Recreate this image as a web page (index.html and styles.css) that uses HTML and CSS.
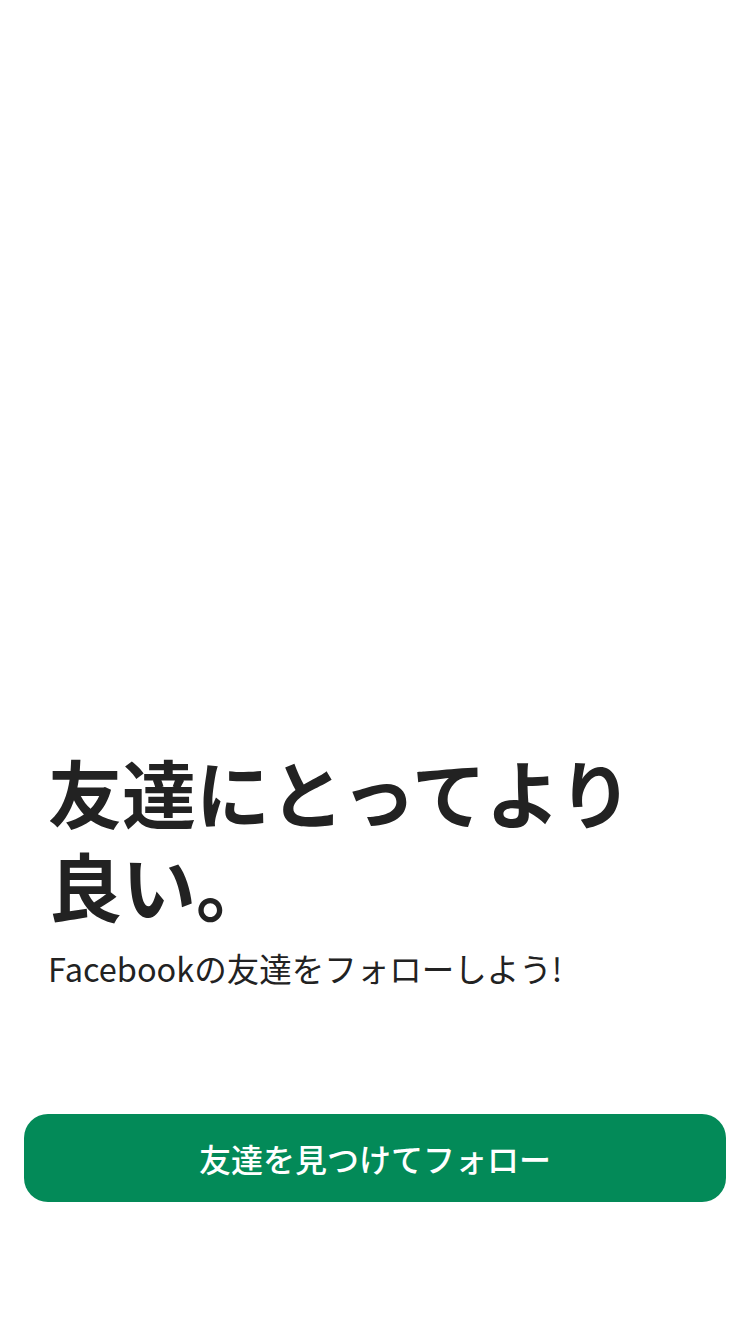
FILE: index.html
```html
<!DOCTYPE html>
<html lang="ja">
<head>
<meta charset="utf-8">
<link rel="stylesheet" href="styles.css">
</head>
<body>
<main class="page">
  <section class="intro">
    <h1 class="title">友達にとってより<br>良い。</h1>
    <p class="subtitle">Facebookの友達をフォローしよう!</p>
  </section>
  <div class="actions">
    <button class="cta">友達を見つけてフォロー</button>
  </div>
</main>
</body>
</html>
```

FILE: styles.css
```css
html, body {
  margin: 0;
  padding: 0;
  background: #ffffff;
}
.page {
  width: 750px;
  height: 1334px;
  display: flex;
  flex-direction: column;
  font-family: "Noto Sans CJK JP", "Noto Sans", sans-serif;
  color: #222222;
}
.intro {
  padding: 744px 48px 0 48px;
}
.title {
  margin: 0;
  font-size: 74px;
  line-height: 93px;
  font-weight: 700;
  letter-spacing: 0;
}
.subtitle {
  margin: 15px 0 0 0;
  font-size: 32.5px;
  line-height: 46px;
  font-weight: 400;
}
.actions {
  padding: 0 24px;
  margin-top: 123px;
}
.cta {
  width: 100%;
  height: 88px;
  border: none;
  border-radius: 24px;
  background: #038a58;
  color: #ffffff;
  font-family: "Noto Sans CJK JP", "Noto Sans", sans-serif;
  font-size: 32px;
  font-weight: 500;
  padding: 0;
}
```
